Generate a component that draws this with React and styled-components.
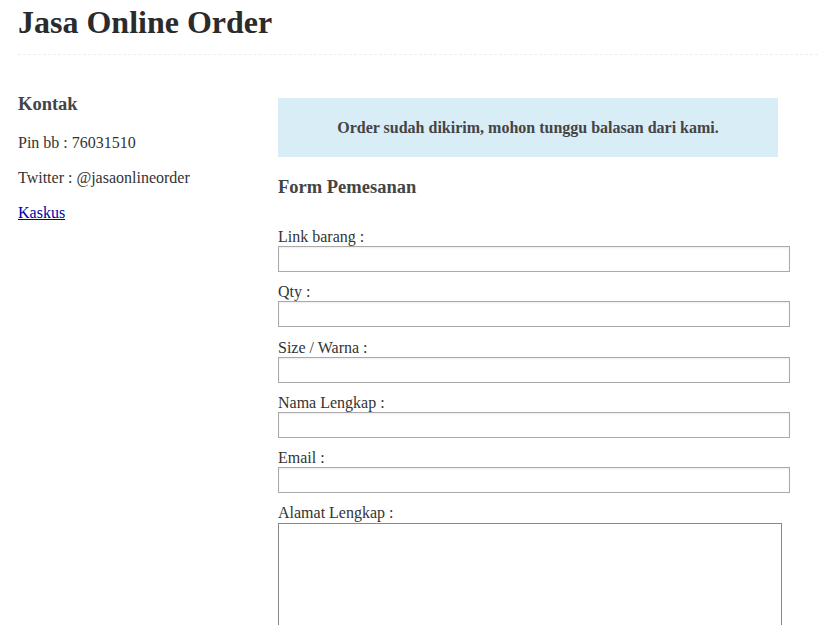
import React from "react";
import styled, { createGlobalStyle } from "styled-components";

const GlobalStyle = createGlobalStyle`
  body {
    margin: 0;
    background: #fff;
    font-family: "Liberation Serif", "Times New Roman", serif;
    color: #333;
  }
`;

const Page = styled.div`
  padding: 0 4px 0 18px;
`;

const Header = styled.header`
  padding: 5px 0 14px;
  border-bottom: 1px dashed #eee;
`;

const Title = styled.h1`
  margin: 0;
  font-size: 32px;
  line-height: 35px;
  font-weight: 700;
  color: #2b2b2b;
`;

const Content = styled.div`
  display: grid;
  grid-template-columns: 260px 1fr;
  padding-top: 39px;
`;

const Sidebar = styled.aside`
  display: flex;
  flex-direction: column;
`;

const SectionTitle = styled.h3`
  margin: 0 0 19px;
  font-size: 18.5px;
  line-height: 21px;
  font-weight: 700;
  color: #444;
`;

const Info = styled.p`
  margin: 0 0 17px;
  font-size: 16px;
  line-height: 18px;
  color: #333;
`;

const InfoLink = styled.a`
  color: #0000aa;
  text-decoration: underline;
`;

const Main = styled.main`
  display: flex;
  flex-direction: column;
`;

const Alert = styled.div`
  width: 500px;
  box-sizing: border-box;
  margin-top: 4px;
  padding: 20px 10px;
  background: #d9edf7;
  text-align: center;
  font-size: 16px;
  line-height: 19px;
  font-weight: 700;
  color: #444;
`;

const FormTitle = styled(SectionTitle)`
  margin: 20px 0 17px;
`;

const Form = styled.form`
  display: flex;
  flex-direction: column;
  padding-top: 12px;
`;

const Label = styled.label`
  display: block;
  font-size: 16px;
  line-height: 19px;
  color: #333;
`;

const Input = styled.input`
  display: block;
  width: 512px;
  height: 26px;
  box-sizing: border-box;
  margin: 0 0 10.3px;
  border: 1px solid #aaa;
  box-shadow: inset 0 1px 2px rgba(0, 0, 0, 0.08);
  font-family: inherit;
  font-size: 14px;
`;

const TextArea = styled.textarea`
  display: block;
  width: 504px;
  height: 140px;
  box-sizing: border-box;
  margin: 1px 0 0;
  border: 1px solid #888;
  resize: none;
  font-family: inherit;
`;

const fields = ["Link barang :", "Qty :", "Size / Warna :", "Nama Lengkap :", "Email :"];

export default function App() {
  return (
    <Page>
      <GlobalStyle />
      <Header>
        <Title>Jasa Online Order</Title>
      </Header>
      <Content>
        <Sidebar>
          <SectionTitle>Kontak</SectionTitle>
          <Info>Pin bb : 76031510</Info>
          <Info>Twitter : @jasaonlineorder</Info>
          <Info>
            <InfoLink href="#">Kaskus</InfoLink>
          </Info>
        </Sidebar>
        <Main>
          <Alert>Order sudah dikirim, mohon tunggu balasan dari kami.</Alert>
          <FormTitle>Form Pemesanan</FormTitle>
          <Form>
            {fields.map((f) => (
              <React.Fragment key={f}>
                <Label>{f}</Label>
                <Input type="text" />
              </React.Fragment>
            ))}
            <Label>Alamat Lengkap :</Label>
            <TextArea />
          </Form>
        </Main>
      </Content>
    </Page>
  );
}
